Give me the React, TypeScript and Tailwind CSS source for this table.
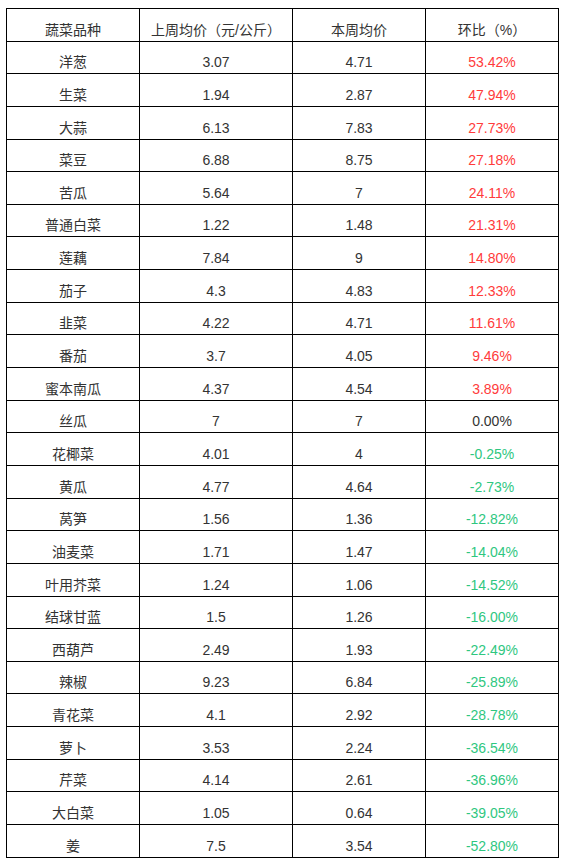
const rows: [string, string, string, string][] = [
  ["洋葱", "3.07", "4.71", "53.42%"],
  ["生菜", "1.94", "2.87", "47.94%"],
  ["大蒜", "6.13", "7.83", "27.73%"],
  ["菜豆", "6.88", "8.75", "27.18%"],
  ["苦瓜", "5.64", "7", "24.11%"],
  ["普通白菜", "1.22", "1.48", "21.31%"],
  ["莲藕", "7.84", "9", "14.80%"],
  ["茄子", "4.3", "4.83", "12.33%"],
  ["韭菜", "4.22", "4.71", "11.61%"],
  ["番茄", "3.7", "4.05", "9.46%"],
  ["蜜本南瓜", "4.37", "4.54", "3.89%"],
  ["丝瓜", "7", "7", "0.00%"],
  ["花椰菜", "4.01", "4", "-0.25%"],
  ["黄瓜", "4.77", "4.64", "-2.73%"],
  ["莴笋", "1.56", "1.36", "-12.82%"],
  ["油麦菜", "1.71", "1.47", "-14.04%"],
  ["叶用芥菜", "1.24", "1.06", "-14.52%"],
  ["结球甘蓝", "1.5", "1.26", "-16.00%"],
  ["西葫芦", "2.49", "1.93", "-22.49%"],
  ["辣椒", "9.23", "6.84", "-25.89%"],
  ["青花菜", "4.1", "2.92", "-28.78%"],
  ["萝卜", "3.53", "2.24", "-36.54%"],
  ["芹菜", "4.14", "2.61", "-36.96%"],
  ["大白菜", "1.05", "0.64", "-39.05%"],
  ["姜", "7.5", "3.54", "-52.80%"],
];

const pctColor = (v: string) =>
  v.startsWith("-") ? "text-[#2fc77f]" : v === "0.00%" ? "text-[#333]" : "text-[#ff3b3b]";

const cell = "border border-black h-[32.65px] align-bottom pb-[1px] text-center text-[14px] leading-[20px]";

export default function App() {
  return (
    <div className="bg-white w-[565px] h-[864px] pt-[8px] pl-[6px] font-['Liberation_Sans','Noto_Sans_CJK_SC',sans-serif] text-[#333]">
      <table className="border-collapse w-[552px] table-fixed">
        <colgroup>
          <col className="w-[133px]" />
          <col className="w-[153px]" />
          <col className="w-[133px]" />
          <col className="w-[133px]" />
        </colgroup>
        <thead>
          <tr>
            <th className={`${cell} font-normal`}>蔬菜品种</th>
            <th className={`${cell} font-normal`}>上周均价（元/公斤）</th>
            <th className={`${cell} font-normal`}>本周均价</th>
            <th className={`${cell} font-normal`}>环比（%）</th>
          </tr>
        </thead>
        <tbody>
          {rows.map(([name, last, cur, pct]) => (
            <tr key={name}>
              <td className={cell}>{name}</td>
              <td className={cell}>{last}</td>
              <td className={cell}>{cur}</td>
              <td className={`${cell} ${pctColor(pct)}`}>{pct}</td>
            </tr>
          ))}
        </tbody>
      </table>
    </div>
  );
}
